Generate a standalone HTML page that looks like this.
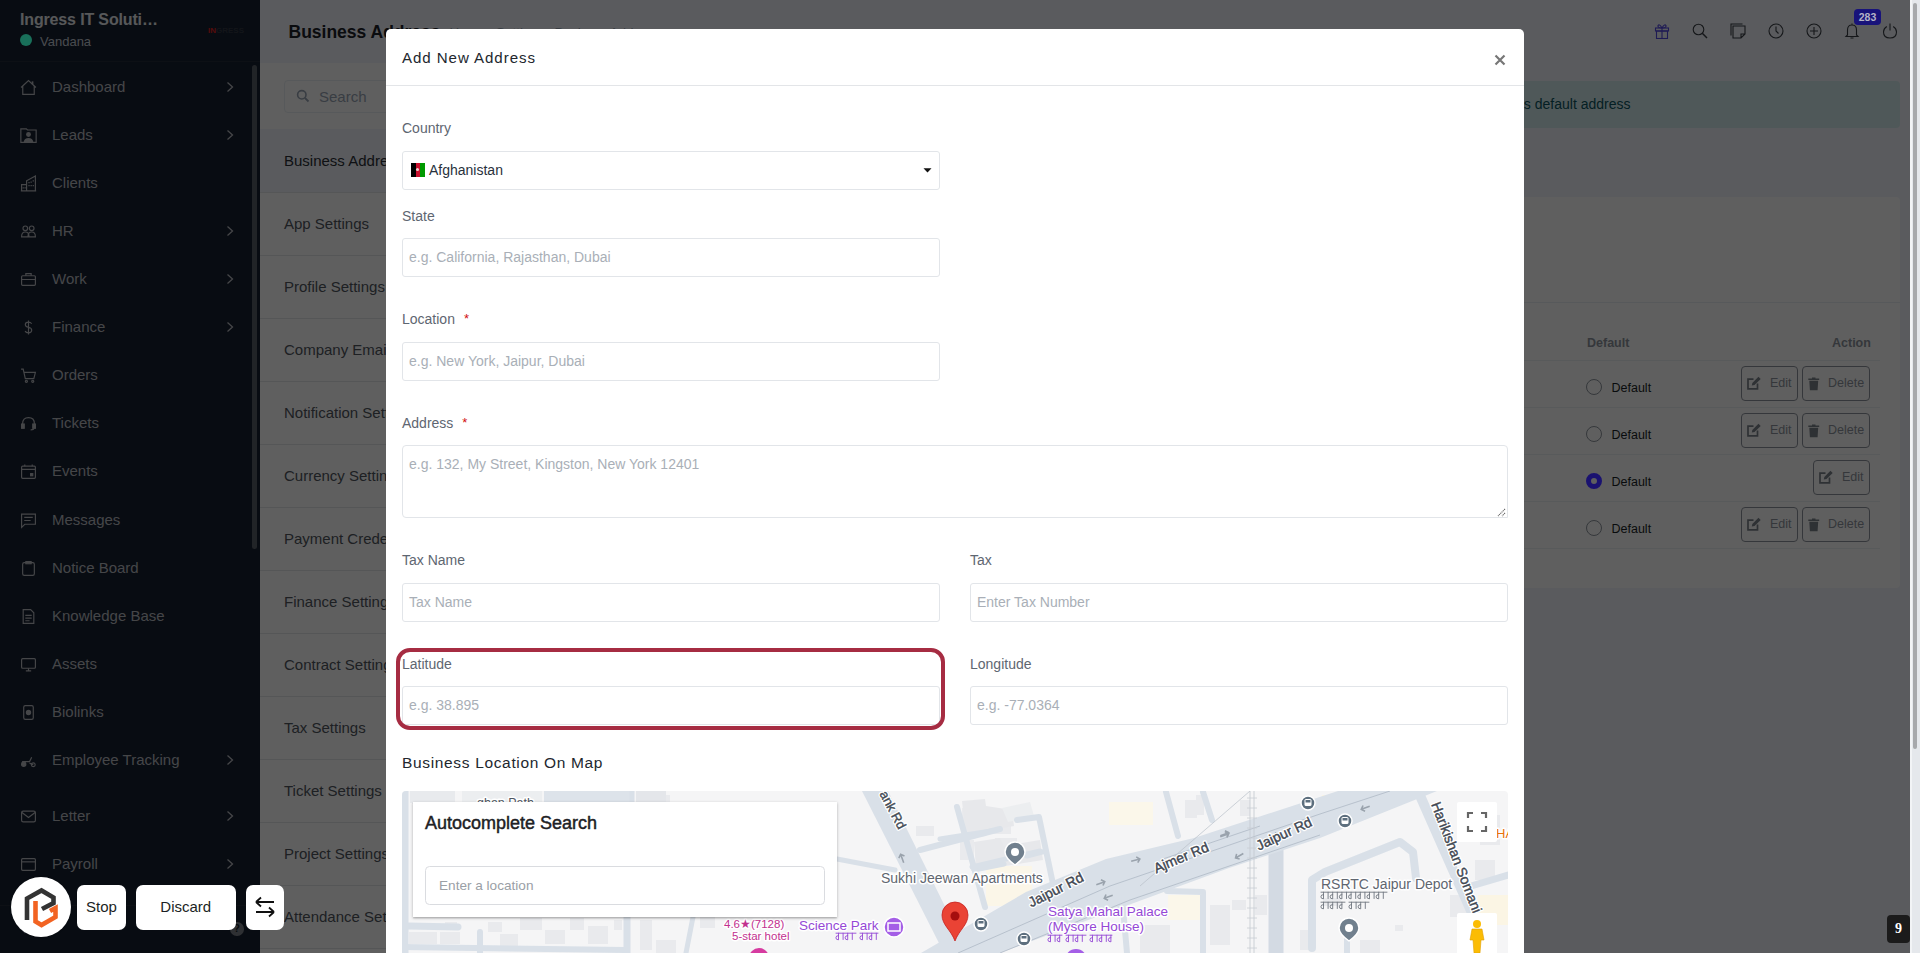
<!DOCTYPE html><html><head><meta charset="utf-8"><style>
*{box-sizing:border-box;margin:0;padding:0}
html,body{width:1920px;height:953px;overflow:hidden;font-family:"Liberation Sans",sans-serif;background:#f2f4f7;color:#28313c}
.a{position:absolute}
.nw{white-space:nowrap}
#sidebar{position:absolute;left:0;top:0;width:260px;height:953px;background:#162031}
.sbi{position:absolute;left:0;width:250px;height:20px;color:#b9bcc1;font-size:15px;line-height:20px}
.sbi .t{position:absolute;left:52px;top:0;white-space:nowrap}
.sbi svg.ic{position:absolute;left:19.5px;top:1.5px;width:17px;height:17px}
.sbi svg.arr{position:absolute;left:225px;top:4px;width:10px;height:12px}
#main{position:absolute;left:260px;top:0;width:1650px;height:953px;background:#f1f4fb}
.smi{position:absolute;left:0;width:270px;height:64px;border-bottom:1px solid #e3e6ea;font-size:15px;color:#50565e;padding-left:24px;line-height:64px;white-space:nowrap}
#backdrop{position:absolute;left:0;top:0;width:1910px;height:953px;background:rgba(0,0,0,0.627)}
#modal{position:absolute;left:386px;top:29px;width:1138px;height:1000px;background:#fff;border-radius:5px 5px 0 0;overflow:hidden}
.lbl{position:absolute;font-size:14px;color:#616e80;line-height:17px;white-space:nowrap}
.inp{position:absolute;height:39px;border:1px solid #e8eef3;border-radius:4px;background:#fff;font-size:14px;color:#b2b8bf;padding-left:6px;line-height:37px;white-space:nowrap}
.req{color:#d30000;margin-left:8px;position:relative;top:-3px}
.tb{position:absolute;height:35px;border:1px solid #8e959e;border-radius:4px;font-size:12.5px;color:#8e959e;line-height:32px;white-space:nowrap}
</style></head><body>
<div id="sidebar">
<div class="a" style="left:0;top:0;width:260px;height:62px;border-bottom:1px solid #252d38"></div>
<div class="a nw" style="left:20px;top:10px;font-size:16px;font-weight:bold;color:#e9ecef;line-height:20px;letter-spacing:-0.15px">Ingress IT Soluti&hellip;</div>
<div class="a nw" style="left:40px;top:34px;font-size:13px;color:#c4cbd4;line-height:16px">Vandana</div>
<div class="a nw" style="left:208px;top:27px;font-size:8px;font-weight:bold;color:#e02020;line-height:8px">IN<span style="color:#333a44">GRESS</span></div>
<div class="a" style="left:252px;top:65px;width:5px;height:484px;background:#5a6068;border-radius:3px"></div>
<div class="sbi" style="top:77px"><svg class="ic" viewBox="0 0 16 16" fill="none" stroke="#b9bcc1" stroke-width="1.1"><path d="M1 8 L8 1.5 L15 8 M2.6 6.5 V14.5 H13.4 V6.5"/><path d="M11.8 2.2 V5" stroke-width="1.6"/></svg><span class="t">Dashboard</span><svg class="arr" viewBox="0 0 10 12"><path d="M2.5 1.5 L7.5 6 L2.5 10.5" fill="none" stroke="#b9bcc1" stroke-width="1.3"/></svg></div>
<div class="sbi" style="top:125px"><svg class="ic" viewBox="0 0 16 16" fill="none" stroke="#b9bcc1" stroke-width="1.1"><path d="M0.8 14.5 V1.8 H6 L7 2.8 H15.2 V14.5 Z"/><circle cx="8" cy="7" r="2.3" fill="#b9bcc1" stroke="none"/><path d="M3.5 14 Q4 10.3 8 10.3 Q12 10.3 12.5 14 Z" fill="#b9bcc1" stroke="none"/></svg><span class="t">Leads</span><svg class="arr" viewBox="0 0 10 12"><path d="M2.5 1.5 L7.5 6 L2.5 10.5" fill="none" stroke="#b9bcc1" stroke-width="1.3"/></svg></div>
<div class="sbi" style="top:173px"><svg class="ic" viewBox="0 0 16 16" fill="none" stroke="#b9bcc1" stroke-width="1.1"><path d="M0.8 15 H15.2 M1.5 15 V9 H6.2 M6.2 15 V5.5 L14.5 1 V15"/><path d="M8.5 6.5v1.2M10.5 6v1.2M12.5 5v1.2M8.5 9.5v1.2M10.5 9.5v1.2M12.5 9.5v1.2M3 11.5v1.2M4.8 11.5v1.2" stroke-width="1.2"/></svg><span class="t">Clients</span></div>
<div class="sbi" style="top:221px"><svg class="ic" viewBox="0 0 16 16" fill="none" stroke="#b9bcc1" stroke-width="1.1"><circle cx="5" cy="5" r="2.2"/><circle cx="11" cy="5" r="2.2"/><path d="M1.5 13 Q1.5 8.5 5 8.5 Q8.5 8.5 8.5 13 Z M7.5 13 Q7.5 8.5 11 8.5 Q14.5 8.5 14.5 13 Z"/></svg><span class="t">HR</span><svg class="arr" viewBox="0 0 10 12"><path d="M2.5 1.5 L7.5 6 L2.5 10.5" fill="none" stroke="#b9bcc1" stroke-width="1.3"/></svg></div>
<div class="sbi" style="top:269px"><svg class="ic" viewBox="0 0 16 16" fill="none" stroke="#b9bcc1" stroke-width="1.1"><rect x="1.5" y="4.5" width="13" height="9" rx="1"/><path d="M5.5 4.5 V2.5 H10.5 V4.5 M1.5 8 H14.5"/></svg><span class="t">Work</span><svg class="arr" viewBox="0 0 10 12"><path d="M2.5 1.5 L7.5 6 L2.5 10.5" fill="none" stroke="#b9bcc1" stroke-width="1.3"/></svg></div>
<div class="sbi" style="top:317px"><svg class="ic" viewBox="0 0 16 16" fill="none" stroke="#b9bcc1" stroke-width="1.1"><path d="M11 4.5 Q10 3 8 3 Q5 3 5 5.2 Q5 7.3 8 7.8 Q11 8.3 11 10.6 Q11 13 8 13 Q5.5 13 4.8 11.3 M8 1.5 V14.5"/></svg><span class="t">Finance</span><svg class="arr" viewBox="0 0 10 12"><path d="M2.5 1.5 L7.5 6 L2.5 10.5" fill="none" stroke="#b9bcc1" stroke-width="1.3"/></svg></div>
<div class="sbi" style="top:365px"><svg class="ic" viewBox="0 0 16 16" fill="none" stroke="#b9bcc1" stroke-width="1.1"><path d="M1 2 H3 L5 11 H13 L14.5 5 H4"/><circle cx="6" cy="13.5" r="1"/><circle cx="12" cy="13.5" r="1"/></svg><span class="t">Orders</span></div>
<div class="sbi" style="top:413px"><svg class="ic" viewBox="0 0 16 16" fill="none" stroke="#b9bcc1" stroke-width="1.1"><path d="M2.5 10 V8 Q2.5 2.5 8 2.5 Q13.5 2.5 13.5 8 V10"/><rect x="1.5" y="8.5" width="2.5" height="4" fill="#b9bcc1"/><rect x="12" y="8.5" width="2.5" height="4" fill="#b9bcc1"/><path d="M13 12.5 Q13 14 10 14"/></svg><span class="t">Tickets</span></div>
<div class="sbi" style="top:461px"><svg class="ic" viewBox="0 0 16 16" fill="none" stroke="#b9bcc1" stroke-width="1.1"><rect x="1.5" y="3" width="13" height="11.5" rx="1"/><path d="M1.5 6 H14.5 M4.5 1.5 V3 M11.5 1.5 V3"/><rect x="10" y="10" width="2" height="2" fill="#b9bcc1"/></svg><span class="t">Events</span></div>
<div class="sbi" style="top:510px"><svg class="ic" viewBox="0 0 16 16" fill="none" stroke="#b9bcc1" stroke-width="1.1"><path d="M1.5 2 H14.5 V11.5 H4.5 L1.5 14.5 Z M4 5 H12 M4 8 H10"/></svg><span class="t">Messages</span></div>
<div class="sbi" style="top:558px"><svg class="ic" viewBox="0 0 16 16" fill="none" stroke="#b9bcc1" stroke-width="1.1"><rect x="2.5" y="2.5" width="11" height="12" rx="1.5"/><rect x="5.5" y="1.5" width="5" height="2"/></svg><span class="t">Notice Board</span></div>
<div class="sbi" style="top:606px"><svg class="ic" viewBox="0 0 16 16" fill="none" stroke="#b9bcc1" stroke-width="1.1"><path d="M3 1.5 H10 L13 4.5 V14.5 H3 Z M5 7 H11 M5 9.5 H11 M5 12 H9"/></svg><span class="t">Knowledge Base</span></div>
<div class="sbi" style="top:654px"><svg class="ic" viewBox="0 0 16 16" fill="none" stroke="#b9bcc1" stroke-width="1.1"><rect x="1.5" y="2.5" width="13" height="9" rx="1"/><path d="M5.5 14 H10.5 M8 11.5 V14"/></svg><span class="t">Assets</span></div>
<div class="sbi" style="top:702px"><svg class="ic" viewBox="0 0 16 16" fill="none" stroke="#b9bcc1" stroke-width="1.1"><rect x="3.5" y="1.5" width="9" height="13" rx="1.5"/><circle cx="8" cy="8" r="2" fill="#b9bcc1"/></svg><span class="t">Biolinks</span></div>
<div class="sbi" style="top:750px"><svg class="ic" viewBox="0 0 16 16" fill="none" stroke="#b9bcc1" stroke-width="1.1"><circle cx="3.5" cy="11.5" r="2" fill="#b9bcc1"/><circle cx="12.5" cy="12" r="1.8"/><path d="M2 9 H9 L11 5 M9 10.5 L12.5 12"/></svg><span class="t">Employee Tracking</span><svg class="arr" viewBox="0 0 10 12"><path d="M2.5 1.5 L7.5 6 L2.5 10.5" fill="none" stroke="#b9bcc1" stroke-width="1.3"/></svg></div>
<div class="sbi" style="top:806px"><svg class="ic" viewBox="0 0 16 16" fill="none" stroke="#b9bcc1" stroke-width="1.1"><rect x="1.5" y="3" width="13" height="10" rx="1.5"/><path d="M1.5 4 L8 9 L14.5 4"/></svg><span class="t">Letter</span><svg class="arr" viewBox="0 0 10 12"><path d="M2.5 1.5 L7.5 6 L2.5 10.5" fill="none" stroke="#b9bcc1" stroke-width="1.3"/></svg></div>
<div class="sbi" style="top:854px"><svg class="ic" viewBox="0 0 16 16" fill="none" stroke="#b9bcc1" stroke-width="1.1"><rect x="1.5" y="2.5" width="13" height="11" rx="1"/><path d="M1.5 5.5 H14.5"/></svg><span class="t">Payroll</span><svg class="arr" viewBox="0 0 10 12"><path d="M2.5 1.5 L7.5 6 L2.5 10.5" fill="none" stroke="#b9bcc1" stroke-width="1.3"/></svg></div>
<div class="a" style="left:0;top:905px;width:260px;height:1px;background:#252d38"></div>
<svg class="a" style="left:18px;top:921px" width="10" height="14" viewBox="0 0 10 14"><path d="M7.5 2 L2.5 7 L7.5 12" fill="none" stroke="#99a5b5" stroke-width="1.6"/></svg>
<div class="a" style="left:230px;top:922px;width:13.5px;height:13.5px;border-radius:50%;background:#7d8288;color:#171f29;font-size:10px;font-weight:bold;line-height:13.5px;text-align:center">?</div>
</div>
<div id="main">
<div class="a nw" style="left:28.5px;top:22.44px;font-size:17.50px;line-height:21px;color:#1c2128;font-weight:bold;">Business Address</div>
<div class="a nw" style="left:189.5px;top:25.32px;font-size:13.50px;line-height:16px;color:#99a5b5;">Home</div>
<div class="a nw" style="left:236.0px;top:25.32px;font-size:13.50px;line-height:16px;color:#99a5b5;">Settings</div>
<div class="a nw" style="left:294.5px;top:25.32px;font-size:13.50px;line-height:16px;color:#99a5b5;">Business</div>
<div class="a nw" style="left:349.5px;top:25.32px;font-size:13.50px;line-height:16px;color:#99a5b5;">Address</div>
<div class="a" style="left:0;top:63px;width:270px;height:890px;background:#fff;border-right:1px solid #e8eef3"></div>
<div class="a" style="left:24px;top:80px;width:230px;height:33px;border:1px solid #e8eef3;border-radius:4px"></div>
<svg class="a" style="left:36px;top:89px" width="14" height="14" viewBox="0 0 14 14"><circle cx="5.8" cy="5.8" r="4.2" fill="none" stroke="#99a5b5" stroke-width="1.6"/><path d="M9 9 L12.5 12.5" stroke="#99a5b5" stroke-width="1.8"/></svg>
<div class="a nw" style="left:59px;top:88px;font-size:15px;color:#99a5b5;line-height:17px">Search</div>
<div class="smi" style="top:129px;background:#f1f4fb;color:#2a2f36;">Business Address</div>
<div class="smi" style="top:192px;">App Settings</div>
<div class="smi" style="top:255px;">Profile Settings</div>
<div class="smi" style="top:318px;">Company Email</div>
<div class="smi" style="top:381px;">Notification Settings</div>
<div class="smi" style="top:444px;">Currency Settings</div>
<div class="smi" style="top:507px;">Payment Credentials</div>
<div class="smi" style="top:570px;">Finance Settings</div>
<div class="smi" style="top:633px;">Contract Settings</div>
<div class="smi" style="top:696px;">Tax Settings</div>
<div class="smi" style="top:759px;">Ticket Settings</div>
<div class="smi" style="top:822px;">Project Settings</div>
<div class="smi" style="top:885px;">Attendance Settings</div>
<div class="a" style="left:300px;top:81px;width:1340px;height:47px;background:#d4ecef;border-radius:4px"></div>
<div class="a nw" style="right:279.5px;top:95.5px;font-size:14px;color:#0c5460;line-height:17px">Click on the radio button to set this as default address</div>
<div class="a" style="left:300px;top:197px;width:1340px;height:391px;background:#fff;border-radius:4px"></div>
<div class="a" style="left:300px;top:302px;width:1340px;height:1px;background:#e8eef3"></div>
<div class="a nw" style="left:1327.0px;top:336.17px;font-size:12.50px;line-height:15px;color:#8e959e;font-weight:bold;">Default</div>
<div class="a nw" style="left:1572.0px;top:336.17px;font-size:12.50px;line-height:15px;color:#8e959e;font-weight:bold;">Action</div>
<div class="a" style="left:300px;top:360px;width:1320px;height:1px;background:#edf0f3"></div>
<div class="a" style="left:1326px;top:379px;width:16px;height:16px;border-radius:50%;border:1px solid #8e959e;background:#fff"></div>
<div class="a nw" style="left:1351.5px;top:381.17px;font-size:12.50px;line-height:15px;color:#1a1f26;">Default</div>
<div class="tb" style="left:1481px;top:366px;width:57px;height:35px"><svg class="a" style="left:5px;top:9px" width="15" height="14" viewBox="0 0 15 14"><path d="M10.5 7.5 V12.8 H1 V3.2 H6.5" fill="none" stroke="#7d848c" stroke-width="1.7"/><path d="M4.8 9.6 L5.3 7 L11.5 0.8 L13.7 3 L7.5 9.1 Z" fill="#7d848c"/></svg><span class="a" style="left:28px;top:0">Edit</span></div>
<div class="tb" style="left:1542px;top:366px;width:68px;height:35px"><svg class="a" style="left:5px;top:10px" width="12" height="14" viewBox="0 0 12 14"><path d="M0.3 1.6 H11.2 V3 H0.3 Z M4 0.4 H7.5 V1.6 H4 Z M1.3 3.8 H10.2 L9.6 13.2 H1.9 Z" fill="#7d848c"/></svg><span class="a" style="left:25px;top:0">Delete</span></div>
<div class="a" style="left:300px;top:407px;width:1320px;height:1px;background:#edf0f3"></div>
<div class="a" style="left:1326px;top:426px;width:16px;height:16px;border-radius:50%;border:1px solid #8e959e;background:#fff"></div>
<div class="a nw" style="left:1351.5px;top:428.17px;font-size:12.50px;line-height:15px;color:#1a1f26;">Default</div>
<div class="tb" style="left:1481px;top:413px;width:57px;height:35px"><svg class="a" style="left:5px;top:9px" width="15" height="14" viewBox="0 0 15 14"><path d="M10.5 7.5 V12.8 H1 V3.2 H6.5" fill="none" stroke="#7d848c" stroke-width="1.7"/><path d="M4.8 9.6 L5.3 7 L11.5 0.8 L13.7 3 L7.5 9.1 Z" fill="#7d848c"/></svg><span class="a" style="left:28px;top:0">Edit</span></div>
<div class="tb" style="left:1542px;top:413px;width:68px;height:35px"><svg class="a" style="left:5px;top:10px" width="12" height="14" viewBox="0 0 12 14"><path d="M0.3 1.6 H11.2 V3 H0.3 Z M4 0.4 H7.5 V1.6 H4 Z M1.3 3.8 H10.2 L9.6 13.2 H1.9 Z" fill="#7d848c"/></svg><span class="a" style="left:25px;top:0">Delete</span></div>
<div class="a" style="left:300px;top:454px;width:1320px;height:1px;background:#edf0f3"></div>
<div class="a nw" style="left:1351.5px;top:475.17px;font-size:12.50px;line-height:15px;color:#1a1f26;">Default</div>
<div class="tb" style="left:1553px;top:460px;width:57px;height:35px"><svg class="a" style="left:5px;top:9px" width="15" height="14" viewBox="0 0 15 14"><path d="M10.5 7.5 V12.8 H1 V3.2 H6.5" fill="none" stroke="#7d848c" stroke-width="1.7"/><path d="M4.8 9.6 L5.3 7 L11.5 0.8 L13.7 3 L7.5 9.1 Z" fill="#7d848c"/></svg><span class="a" style="left:28px;top:0">Edit</span></div>
<div class="a" style="left:300px;top:501px;width:1320px;height:1px;background:#edf0f3"></div>
<div class="a" style="left:1326px;top:520px;width:16px;height:16px;border-radius:50%;border:1px solid #8e959e;background:#fff"></div>
<div class="a nw" style="left:1351.5px;top:522.17px;font-size:12.50px;line-height:15px;color:#1a1f26;">Default</div>
<div class="tb" style="left:1481px;top:507px;width:57px;height:35px"><svg class="a" style="left:5px;top:9px" width="15" height="14" viewBox="0 0 15 14"><path d="M10.5 7.5 V12.8 H1 V3.2 H6.5" fill="none" stroke="#7d848c" stroke-width="1.7"/><path d="M4.8 9.6 L5.3 7 L11.5 0.8 L13.7 3 L7.5 9.1 Z" fill="#7d848c"/></svg><span class="a" style="left:28px;top:0">Edit</span></div>
<div class="tb" style="left:1542px;top:507px;width:68px;height:35px"><svg class="a" style="left:5px;top:10px" width="12" height="14" viewBox="0 0 12 14"><path d="M0.3 1.6 H11.2 V3 H0.3 Z M4 0.4 H7.5 V1.6 H4 Z M1.3 3.8 H10.2 L9.6 13.2 H1.9 Z" fill="#7d848c"/></svg><span class="a" style="left:25px;top:0">Delete</span></div>
<div class="a" style="left:300px;top:548px;width:1320px;height:1px;background:#edf0f3"></div>
<svg class="a" style="left:1394px;top:23px" width="16" height="16" viewBox="0 0 16 16" fill="none" stroke="#5248e0" stroke-width="1.1"><rect x="1.5" y="5" width="13" height="3"/><rect x="2.5" y="8" width="11" height="7.5"/><path d="M8 5 V15.5 M8 5 Q5.5 0.5 4 2.5 Q3.5 5 8 5 Q10.5 0.5 12 2.5 Q12.5 5 8 5"/></svg>
<svg class="a" style="left:1432px;top:23px" width="16" height="16" viewBox="0 0 16 16" fill="none" stroke="#3a3f46" stroke-width="1.1"><circle cx="6.5" cy="6.5" r="5.3"/><path d="M10.3 10.3 L15 15" stroke-width="1.5"/></svg>
<svg class="a" style="left:1470px;top:23px" width="16" height="16" viewBox="0 0 16 16" fill="none" stroke="#3a3f46" stroke-width="1.1"><path d="M1 12.5 V1 H12.5"/><path d="M3 3 H15 V11 L11 15 H3 Z M15 11 H11 V15"/></svg>
<svg class="a" style="left:1508px;top:23px" width="16" height="16" viewBox="0 0 16 16" fill="none" stroke="#3a3f46" stroke-width="1.1"><circle cx="8" cy="8" r="7"/><path d="M8 3.5 V8 L10.5 10.5"/></svg>
<svg class="a" style="left:1546px;top:23px" width="16" height="16" viewBox="0 0 16 16" fill="none" stroke="#3a3f46" stroke-width="1.1"><circle cx="8" cy="8" r="7"/><path d="M8 4 V12 M4 8 H12"/></svg>
<svg class="a" style="left:1584px;top:23px" width="16" height="16" viewBox="0 0 16 16" fill="none" stroke="#3a3f46" stroke-width="1.1"><path d="M3.5 12 V7 Q3.5 2 8 2 Q12.5 2 12.5 7 V12 L14 13.5 H2 Z M6.5 15 H9.5 M8 0.5 V2"/></svg>
<svg class="a" style="left:1622px;top:23px" width="16" height="16" viewBox="0 0 16 16" fill="none" stroke="#3a3f46" stroke-width="1.1"><path d="M4.8 3.5 Q1.5 5.5 1.5 9 Q1.5 15 8 15 Q14.5 15 14.5 9 Q14.5 5.5 11.2 3.5 M8 0.5 V7.5"/></svg>
</div>
<div id="backdrop"></div>
<div class="a" style="left:1586px;top:473px;width:16px;height:16px;border-radius:50%;border:5px solid #1a1270;background:#5f5f5f"></div>
<div class="a nw" style="left:1854px;top:9px;width:27px;height:16px;border-radius:4px;background:#18137a;color:#b4b4c6;font-size:10.5px;font-weight:bold;line-height:16px;text-align:center">283</div>
<div class="a" style="left:20px;top:34px;width:12px;height:12px;border-radius:50%;background:#19705a"></div>
<div class="a" style="left:1910px;top:0;width:10px;height:953px;background:#e5e8ec;border-left:2px solid #f2f4f6"><div class="a" style="left:1px;top:3px;width:4px;height:746px;background:#a7a9ac;border-radius:2px"></div></div>
<div id="modal">
<div class="a" style="left:0;top:56px;width:1138px;height:1px;background:#e3e5e8"></div>
<div class="a nw" style="left:16.0px;top:19.77px;font-size:15.10px;line-height:18px;color:#22272e;letter-spacing:0.93px;">Add New Address</div>
<svg class="a" style="left:1108px;top:25px" width="12" height="12" viewBox="0 0 12 12"><path d="M1.5 1.5 L10.5 10.5 M10.5 1.5 L1.5 10.5" stroke="#777" stroke-width="2.2"/></svg>
<div class="a nw" style="left:16.0px;top:90.65px;font-size:14.00px;line-height:17px;color:#5e6671;">Country</div>
<div class="a" style="left:16px;top:122px;width:538px;height:39px;border:1px solid #e2e5e9;border-radius:3px"></div>
<div class="a" style="left:25px;top:134px;width:14px;height:14px;background:linear-gradient(90deg,#000 0 33%,#c8102e 33% 66%,#009a00 66% 100%)"></div>
<div class="a" style="left:30px;top:139px;width:3px;height:3px;background:#f4d0d0;border-radius:50%"></div>
<div class="a nw" style="left:43.0px;top:132.65px;font-size:14.00px;line-height:17px;color:#28313c;">Afghanistan</div>
<svg class="a" style="left:537px;top:139px" width="9" height="5" viewBox="0 0 9 5"><path d="M0.5 0.3 L8.5 0.3 L4.5 4.6 Z" fill="#111"/></svg>
<div class="a nw" style="left:16.0px;top:178.65px;font-size:14.00px;line-height:17px;color:#5e6671;">State</div>
<div class="a" style="left:16px;top:209px;width:538px;height:39px;border:1px solid #e2e5e9;border-radius:3px"></div>
<div class="a nw" style="left:23.0px;top:219.65px;font-size:14.00px;line-height:17px;color:#a9afb7;">e.g. California, Rajasthan, Dubai</div>
<div class="a nw" style="left:16.0px;top:281.65px;font-size:14.00px;line-height:17px;color:#5e6671;">Location<span style="color:#d21010;margin-left:9px;position:relative;top:-1px;font-size:13px">*</span></div>
<div class="a" style="left:16px;top:313px;width:538px;height:39px;border:1px solid #e2e5e9;border-radius:3px"></div>
<div class="a nw" style="left:23.0px;top:323.65px;font-size:14.00px;line-height:17px;color:#a9afb7;">e.g. New York, Jaipur, Dubai</div>
<div class="a nw" style="left:16.0px;top:385.65px;font-size:14.00px;line-height:17px;color:#5e6671;">Address<span style="color:#d21010;margin-left:9px;position:relative;top:-1px;font-size:13px">*</span></div>
<div class="a" style="left:16px;top:416px;width:1106px;height:73px;border:1px solid #e2e5e9;border-radius:4px 4px 0 4px"></div>
<div class="a nw" style="left:23.0px;top:426.65px;font-size:14.00px;line-height:17px;color:#a9afb7;">e.g. 132, My Street, Kingston, New York 12401</div>
<svg class="a" style="left:1111px;top:479px" width="9" height="9" viewBox="0 0 9 9"><path d="M8 1 L1 8 M8 5 L5 8" stroke="#666" stroke-width="1.1" stroke-dasharray="1.2 0.6"/></svg>
<div class="a nw" style="left:16.0px;top:522.65px;font-size:14.00px;line-height:17px;color:#5e6671;">Tax Name</div>
<div class="a nw" style="left:584.0px;top:522.65px;font-size:14.00px;line-height:17px;color:#5e6671;">Tax</div>
<div class="a" style="left:16px;top:554px;width:538px;height:39px;border:1px solid #e2e5e9;border-radius:3px"></div>
<div class="a nw" style="left:23.0px;top:564.65px;font-size:14.00px;line-height:17px;color:#a9afb7;">Tax Name</div>
<div class="a" style="left:584px;top:554px;width:538px;height:39px;border:1px solid #e2e5e9;border-radius:3px"></div>
<div class="a nw" style="left:591.0px;top:564.65px;font-size:14.00px;line-height:17px;color:#a9afb7;">Enter Tax Number</div>
<div class="a nw" style="left:16.0px;top:626.65px;font-size:14.00px;line-height:17px;color:#5e6671;">Latitude</div>
<div class="a nw" style="left:584.0px;top:626.65px;font-size:14.00px;line-height:17px;color:#5e6671;">Longitude</div>
<div class="a" style="left:16px;top:657px;width:538px;height:39px;border:1px solid #e2e5e9;border-radius:3px"></div>
<div class="a nw" style="left:23.0px;top:667.65px;font-size:14.00px;line-height:17px;color:#a9afb7;">e.g. 38.895</div>
<div class="a" style="left:584px;top:657px;width:538px;height:39px;border:1px solid #e2e5e9;border-radius:3px"></div>
<div class="a nw" style="left:591.0px;top:667.65px;font-size:14.00px;line-height:17px;color:#a9afb7;">e.g. -77.0364</div>
<div class="a" style="left:10px;top:619px;width:549px;height:82px;border:4px solid #a62c42;border-radius:14px"></div>
<div class="a nw" style="left:16.0px;top:724.13px;font-size:15.50px;line-height:19px;color:#22272e;letter-spacing:0.66px;">Business Location On Map</div>
</div>
<svg class="a" style="left:402px;top:791px;border-radius:4px 4px 0 0" width="1106" height="162" viewBox="402 791 1106 162" font-family="Liberation Sans, sans-serif"><rect x="402" y="791" width="1106" height="162" fill="#f5f5f6"/><rect x="412" y="796" width="12" height="8" fill="#e9eaed"/><rect x="430" y="794" width="14" height="6" fill="#e9eaed"/><rect x="445" y="922" width="12" height="8" fill="#e9eaed"/><rect x="409" y="932" width="28" height="12" fill="#e9eaed"/><rect x="440" y="932" width="20" height="12" fill="#e9eaed"/><rect x="488" y="922" width="14" height="10" fill="#e9eaed"/><rect x="500" y="934" width="18" height="12" fill="#e9eaed"/><rect x="520" y="918" width="22" height="12" fill="#e9eaed"/><rect x="545" y="930" width="20" height="14" fill="#e9eaed"/><rect x="570" y="918" width="14" height="12" fill="#e9eaed"/><rect x="588" y="926" width="20" height="18" fill="#e9eaed"/><rect x="614" y="920" width="8" height="10" fill="#e9eaed"/><rect x="640" y="920" width="12" height="30" fill="#e9eaed"/><rect x="656" y="940" width="20" height="13" fill="#e9eaed"/><rect x="700" y="912" width="15" height="16" fill="#e9eaed"/><rect x="565" y="800" width="40" height="8" fill="#e9eaed"/><rect x="640" y="795" width="30" height="8" fill="#e9eaed"/><rect x="916" y="826" width="18" height="10" fill="#e9eaed"/><rect x="962" y="808" width="20" height="22" fill="#e9eaed"/><rect x="985" y="818" width="26" height="16" fill="#e9eaed"/><rect x="995" y="838" width="22" height="18" fill="#e9eaed"/><rect x="960" y="840" width="14" height="20" fill="#e9eaed"/><rect x="1008" y="870" width="22" height="18" fill="#e9eaed"/><rect x="1118" y="890" width="18" height="12" fill="#e9eaed"/><rect x="1185" y="800" width="12" height="18" fill="#e9eaed"/><rect x="1196" y="795" width="8" height="20" fill="#e9eaed"/><rect x="1240" y="800" width="10" height="16" fill="#e9eaed"/><rect x="1210" y="905" width="20" height="40" fill="#e9eaed"/><rect x="1232" y="900" width="14" height="10" fill="#e9eaed"/><rect x="1140" y="925" width="30" height="28" fill="#e9eaed"/><rect x="1255" y="895" width="12" height="20" fill="#e9eaed"/><rect x="1325" y="810" width="30" height="10" fill="#e9eaed"/><rect x="1360" y="800" width="12" height="8" fill="#e9eaed"/><rect x="1480" y="815" width="20" height="30" fill="#e9eaed"/><rect x="1475" y="860" width="20" height="20" fill="#e9eaed"/><rect x="1450" y="895" width="20" height="22" fill="#e9eaed"/><rect x="1482" y="900" width="24" height="25" fill="#e9eaed"/><rect x="1395" y="925" width="8" height="6" fill="#e9eaed"/><rect x="1360" y="940" width="20" height="13" fill="#e9eaed"/><rect x="1300" y="930" width="10" height="20" fill="#e9eaed"/><rect x="1323" y="898" width="18" height="8" fill="#e9eaed"/><rect x="986" y="866" width="46" height="40" fill="#fbf6e8"/><path d="M962 801 L985 799 L986 806 L1012 810 L1014 826 L990 830 L986 836 L966 838 Z" fill="#e7e8eb"/><path d="M974 842 L1000 838 L1004 846 L1040 840 L1043 860 L1005 866 L976 868 Z" fill="#e7e8eb"/><path d="M1002 808 L1030 802 L1034 816 L1008 822 Z" fill="#eceef0"/><rect x="1109" y="802" width="44" height="23" fill="#fbf7ea"/><rect x="1168" y="895" width="35" height="25" fill="#fbf7ea"/><rect x="1478" y="895" width="30" height="30" fill="#fbf5e4"/><rect x="1322" y="795" width="18" height="14" fill="#fbf5e4"/><polyline points="940,839 991,831" fill="none" stroke="#d9e0e8" stroke-width="5" stroke-linecap="round" stroke-linejoin="round"/><polyline points="974,870 1004,864" fill="none" stroke="#d9e0e8" stroke-width="5" stroke-linecap="round" stroke-linejoin="round"/><polyline points="1027,856 1046,851" fill="none" stroke="#d9e0e8" stroke-width="5" stroke-linecap="round" stroke-linejoin="round"/><polyline points="405,791 405,953" fill="none" stroke="#d9e0e8" stroke-width="7" stroke-linecap="round" stroke-linejoin="round"/><polyline points="409,926 458,927" fill="none" stroke="#d9e0e8" stroke-width="7" stroke-linecap="round" stroke-linejoin="round"/><polyline points="480,932 480,953" fill="none" stroke="#d9e0e8" stroke-width="6" stroke-linecap="round" stroke-linejoin="round"/><polyline points="402,947 625,950" fill="none" stroke="#d9e0e8" stroke-width="6" stroke-linecap="round" stroke-linejoin="round"/><polyline points="627,917 627,953" fill="none" stroke="#d9e0e8" stroke-width="7" stroke-linecap="round" stroke-linejoin="round"/><polyline points="693,917 686,953" fill="none" stroke="#d9e0e8" stroke-width="5" stroke-linecap="round" stroke-linejoin="round"/><rect x="544" y="791" width="86" height="12" fill="#dde3ea"/><rect x="636" y="791" width="30" height="12" fill="#e4e6ea"/><rect x="410" y="791" width="45" height="12" fill="#e8eaed"/><rect x="462" y="791" width="80" height="12" fill="#eceef0"/><polyline points="632,791 632,802" fill="none" stroke="#d9e0e8" stroke-width="5" stroke-linecap="round" stroke-linejoin="round"/><polyline points="837,859 895,870" fill="none" stroke="#d9e0e8" stroke-width="5" stroke-linecap="round" stroke-linejoin="round"/><polyline points="920,850 1000,829" fill="none" stroke="#d9e0e8" stroke-width="6" stroke-linecap="round" stroke-linejoin="round"/><polyline points="957,807 985,907" fill="none" stroke="#d9e0e8" stroke-width="6" stroke-linecap="round" stroke-linejoin="round"/><polyline points="1017,820 1039,817 1053,884" fill="none" stroke="#d9e0e8" stroke-width="6" stroke-linecap="round" stroke-linejoin="round"/><polyline points="972,867 1040,851" fill="none" stroke="#d9e0e8" stroke-width="5" stroke-linecap="round" stroke-linejoin="round"/><polyline points="1166,792 1178,836" fill="none" stroke="#d9e0e8" stroke-width="6" stroke-linecap="round" stroke-linejoin="round"/><polyline points="1203,792 1212,820" fill="none" stroke="#d9e0e8" stroke-width="6" stroke-linecap="round" stroke-linejoin="round"/><polyline points="1123,908 1127,953" fill="none" stroke="#d9e0e8" stroke-width="6" stroke-linecap="round" stroke-linejoin="round"/><polyline points="1167,891 1203,892 1203,953" fill="none" stroke="#d9e0e8" stroke-width="6" stroke-linecap="round" stroke-linejoin="round"/><polyline points="1276,845 1276,953" fill="none" stroke="#d3dae3" stroke-width="15" stroke-linecap="round" stroke-linejoin="round"/><polyline points="1418,791 1472,913" fill="none" stroke="#d9e0e8" stroke-width="10" stroke-linecap="round" stroke-linejoin="round"/><polyline points="1461,889 1508,875" fill="none" stroke="#d9e0e8" stroke-width="7" stroke-linecap="round" stroke-linejoin="round"/><polyline points="1312,948 1312,880 1325,872 1400,842 1413,852 1416,878" fill="none" stroke="#d9e0e8" stroke-width="8" stroke-linecap="round" stroke-linejoin="round"/><polyline points="1347,935 1347,953" fill="none" stroke="#d9e0e8" stroke-width="6" stroke-linecap="round" stroke-linejoin="round"/><polygon points="862,791 888,791 968,953 944,953" fill="#d9e0e8"/><polygon points="921,953 1026,892 1106,859 1194,838 1338,791 1437,791 1320,838 1229,868 1123,907 1000,953" fill="#d9e0e8"/><polyline points="958,953 1110,886 1320,814 1390,791" fill="none" stroke="#aeb9c5" stroke-width="0.8"/><polyline points="1000,953 1130,900 1320,835" fill="none" stroke="#aeb9c5" stroke-width="0.8"/><polyline points="1160,860 1260,826" fill="none" stroke="#aeb9c5" stroke-width="0.8"/><path d="M1250 791 V953 M1254 791 V953" stroke="#c2c8cf" stroke-width="0.8"/><path d="M1247 798 H1257" stroke="#c9ced4" stroke-width="0.8"/><path d="M1247 808 H1257" stroke="#c9ced4" stroke-width="0.8"/><path d="M1247 818 H1257" stroke="#c9ced4" stroke-width="0.8"/><path d="M1247 828 H1257" stroke="#c9ced4" stroke-width="0.8"/><path d="M1247 838 H1257" stroke="#c9ced4" stroke-width="0.8"/><path d="M1247 848 H1257" stroke="#c9ced4" stroke-width="0.8"/><path d="M1247 858 H1257" stroke="#c9ced4" stroke-width="0.8"/><path d="M1247 868 H1257" stroke="#c9ced4" stroke-width="0.8"/><path d="M1247 878 H1257" stroke="#c9ced4" stroke-width="0.8"/><path d="M1247 888 H1257" stroke="#c9ced4" stroke-width="0.8"/><path d="M1247 898 H1257" stroke="#c9ced4" stroke-width="0.8"/><path d="M1247 908 H1257" stroke="#c9ced4" stroke-width="0.8"/><path d="M1247 918 H1257" stroke="#c9ced4" stroke-width="0.8"/><path d="M1247 928 H1257" stroke="#c9ced4" stroke-width="0.8"/><path d="M1247 938 H1257" stroke="#c9ced4" stroke-width="0.8"/><path d="M1247 948 H1257" stroke="#c9ced4" stroke-width="0.8"/><path d="M1250 791 L1140 886" stroke="#b9c0c8" stroke-width="0.7"/><g transform="translate(1136 860) rotate(-15)"><path d="M-5 0 H4 M1 -3 L4 0 L1 3" fill="none" stroke="#9aa3ad" stroke-width="1.6"/></g><g transform="translate(1101 883) rotate(-20)"><path d="M-5 0 H4 M1 -3 L4 0 L1 3" fill="none" stroke="#9aa3ad" stroke-width="1.6"/></g><g transform="translate(1225 834) rotate(-20)"><path d="M-5 0 H4 M1 -3 L4 0 L1 3" fill="none" stroke="#9aa3ad" stroke-width="1.6"/></g><g transform="translate(1108 897) rotate(160)"><path d="M-5 0 H4 M1 -3 L4 0 L1 3" fill="none" stroke="#9aa3ad" stroke-width="1.6"/></g><g transform="translate(1239 856) rotate(150)"><path d="M-5 0 H4 M1 -3 L4 0 L1 3" fill="none" stroke="#9aa3ad" stroke-width="1.6"/></g><g transform="translate(1365 808) rotate(160)"><path d="M-5 0 H4 M1 -3 L4 0 L1 3" fill="none" stroke="#9aa3ad" stroke-width="1.6"/></g><g transform="translate(1225 835) rotate(-20)"><path d="M-5 0 H4 M1 -3 L4 0 L1 3" fill="none" stroke="#9aa3ad" stroke-width="1.6"/></g><g transform="translate(1275 836) rotate(-20)"><path d="M-5 0 H4 M1 -3 L4 0 L1 3" fill="none" stroke="#9aa3ad" stroke-width="1.6"/></g><g transform="translate(902 858) rotate(-110)"><path d="M-5 0 H4 M1 -3 L4 0 L1 3" fill="none" stroke="#9aa3ad" stroke-width="1.6"/></g><text x="477" y="807" font-size="12.5" fill="#fff" stroke="#fff" stroke-width="3" stroke-linejoin="round" font-weight="normal" text-anchor="start">ghan Path</text><text x="477" y="807" font-size="12.5" fill="#4f5661" font-weight="normal" text-anchor="start">ghan Path</text><text x="881" y="883" font-size="14" fill="#fff" stroke="#fff" stroke-width="3" stroke-linejoin="round" font-weight="normal" text-anchor="start">Sukhi Jeewan Apartments</text><text x="881" y="883" font-size="14" fill="#5f6670" font-weight="normal" text-anchor="start">Sukhi Jeewan Apartments</text><text x="889" y="812" font-size="13" fill="#fff" stroke="#fff" stroke-width="3" stroke-linejoin="round" font-weight="normal" text-anchor="middle" transform="rotate(62 889 812)">ank Rd</text><text x="889" y="812" font-size="13" fill="#444c56" stroke="#444c56" stroke-width="0.4" text-anchor="middle" transform="rotate(62 889 812)">ank Rd</text><text x="1058" y="894" font-size="14" fill="#fff" stroke="#fff" stroke-width="3" stroke-linejoin="round" font-weight="normal" text-anchor="middle" transform="rotate(-27 1058 894)">Jaipur Rd</text><text x="1058" y="894" font-size="14" fill="#3f4752" stroke="#3f4752" stroke-width="0.4" text-anchor="middle" transform="rotate(-27 1058 894)">Jaipur Rd</text><text x="1183" y="862" font-size="14" fill="#fff" stroke="#fff" stroke-width="3" stroke-linejoin="round" font-weight="normal" text-anchor="middle" transform="rotate(-23 1183 862)">Ajmer Rd</text><text x="1183" y="862" font-size="14" fill="#3f4752" stroke="#3f4752" stroke-width="0.4" text-anchor="middle" transform="rotate(-23 1183 862)">Ajmer Rd</text><text x="1286" y="838" font-size="14" fill="#fff" stroke="#fff" stroke-width="3" stroke-linejoin="round" font-weight="normal" text-anchor="middle" transform="rotate(-25 1286 838)">Jaipur Rd</text><text x="1286" y="838" font-size="14" fill="#3f4752" stroke="#3f4752" stroke-width="0.4" text-anchor="middle" transform="rotate(-25 1286 838)">Jaipur Rd</text><text x="1452" y="859" font-size="14" fill="#fff" stroke="#fff" stroke-width="3" stroke-linejoin="round" font-weight="normal" text-anchor="middle" transform="rotate(69 1452 859)">Harikishan Somani</text><text x="1452" y="859" font-size="14" fill="#3f4752" stroke="#3f4752" stroke-width="0.4" text-anchor="middle" transform="rotate(69 1452 859)">Harikishan Somani</text><text x="1321" y="889" font-size="14" fill="#fff" stroke="#fff" stroke-width="3" stroke-linejoin="round" font-weight="normal" text-anchor="start">RSRTC Jaipur Depot</text><text x="1321" y="889" font-size="14" fill="#5f6670" font-weight="normal" text-anchor="start">RSRTC Jaipur Depot</text><path d="M1321.0 892.2 H1387.0 M1323.5 892.2 V898.5 M1323.5 894.6 q-2.6 -0.2 -2.6 2.2 q0 2 2.2 2 M1328.1 892.2 V898.5 M1332.7 892.2 V898.5 M1332.7 894.6 q-2.6 -0.2 -2.6 2.2 q0 2 2.2 2 M1337.3 892.2 V898.5 M1341.9 892.2 V898.5 M1341.9 894.6 q-2.6 -0.2 -2.6 2.2 q0 2 2.2 2 M1346.5 892.2 V898.5 M1351.1 892.2 V898.5 M1351.1 894.6 q-2.6 -0.2 -2.6 2.2 q0 2 2.2 2 M1355.7 892.2 V898.5 M1360.3 892.2 V898.5 M1360.3 894.6 q-2.6 -0.2 -2.6 2.2 q0 2 2.2 2 M1364.9 892.2 V898.5 M1369.5 892.2 V898.5 M1369.5 894.6 q-2.6 -0.2 -2.6 2.2 q0 2 2.2 2 M1374.1 892.2 V898.5 M1378.7 892.2 V898.5 M1378.7 894.6 q-2.6 -0.2 -2.6 2.2 q0 2 2.2 2 M1383.3 892.2 V898.5 " fill="none" stroke="#6f767f" stroke-width="0.9" stroke-linecap="round"/><path d="M1321.0 902.2 H1345.0 M1323.5 902.2 V908.5 M1323.5 904.6 q-2.6 -0.2 -2.6 2.2 q0 2 2.2 2 M1328.1 902.2 V908.5 M1332.7 902.2 V908.5 M1332.7 904.6 q-2.6 -0.2 -2.6 2.2 q0 2 2.2 2 M1337.3 902.2 V908.5 M1341.9 902.2 V908.5 M1341.9 904.6 q-2.6 -0.2 -2.6 2.2 q0 2 2.2 2 M1349.0 902.2 H1369.0 M1351.5 902.2 V908.5 M1351.5 904.6 q-2.6 -0.2 -2.6 2.2 q0 2 2.2 2 M1356.1 902.2 V908.5 M1360.7 902.2 V908.5 M1360.7 904.6 q-2.6 -0.2 -2.6 2.2 q0 2 2.2 2 M1365.3 902.2 V908.5 " fill="none" stroke="#6f767f" stroke-width="0.9" stroke-linecap="round"/><text x="1048" y="916" font-size="13.5" fill="#fff" stroke="#fff" stroke-width="3" stroke-linejoin="round" font-weight="normal" text-anchor="start">Satya Mahal Palace</text><text x="1048" y="916" font-size="13.5" fill="#9548d6" font-weight="normal" text-anchor="start">Satya Mahal Palace</text><text x="1048" y="931" font-size="13.5" fill="#fff" stroke="#fff" stroke-width="3" stroke-linejoin="round" font-weight="normal" text-anchor="start">(Mysore House)</text><text x="1048" y="931" font-size="13.5" fill="#9548d6" font-weight="normal" text-anchor="start">(Mysore House)</text><path d="M1048.0 935.2 H1062.0 M1050.5 935.2 V941.5 M1050.5 937.6 q-2.6 -0.2 -2.6 2.2 q0 2 2.2 2 M1055.1 935.2 V941.5 M1059.7 935.2 V941.5 M1059.7 937.6 q-2.6 -0.2 -2.6 2.2 q0 2 2.2 2 M1066.0 935.2 H1086.0 M1068.5 935.2 V941.5 M1068.5 937.6 q-2.6 -0.2 -2.6 2.2 q0 2 2.2 2 M1073.1 935.2 V941.5 M1077.7 935.2 V941.5 M1077.7 937.6 q-2.6 -0.2 -2.6 2.2 q0 2 2.2 2 M1082.3 935.2 V941.5 M1090.0 935.2 H1112.0 M1092.5 935.2 V941.5 M1092.5 937.6 q-2.6 -0.2 -2.6 2.2 q0 2 2.2 2 M1097.1 935.2 V941.5 M1101.7 935.2 V941.5 M1101.7 937.6 q-2.6 -0.2 -2.6 2.2 q0 2 2.2 2 M1106.3 935.2 V941.5 M1110.9 935.2 V941.5 M1110.9 937.6 q-2.6 -0.2 -2.6 2.2 q0 2 2.2 2 " fill="none" stroke="#9548d6" stroke-width="0.9" stroke-linecap="round"/><text x="799" y="930" font-size="13.5" fill="#fff" stroke="#fff" stroke-width="3" stroke-linejoin="round" font-weight="normal" text-anchor="start">Science Park</text><text x="799" y="930" font-size="13.5" fill="#9548d6" font-weight="normal" text-anchor="start">Science Park</text><path d="M836.0 933.2 H856.0 M838.5 933.2 V939.5 M838.5 935.6 q-2.6 -0.2 -2.6 2.2 q0 2 2.2 2 M843.1 933.2 V939.5 M847.7 933.2 V939.5 M847.7 935.6 q-2.6 -0.2 -2.6 2.2 q0 2 2.2 2 M852.3 933.2 V939.5 M860.0 933.2 H878.0 M862.5 933.2 V939.5 M862.5 935.6 q-2.6 -0.2 -2.6 2.2 q0 2 2.2 2 M867.1 933.2 V939.5 M871.7 933.2 V939.5 M871.7 935.6 q-2.6 -0.2 -2.6 2.2 q0 2 2.2 2 M876.3 933.2 V939.5 " fill="none" stroke="#9548d6" stroke-width="0.9" stroke-linecap="round"/><text x="724" y="928" font-size="11.5" fill="#fff" stroke="#fff" stroke-width="3" stroke-linejoin="round" font-weight="normal" text-anchor="start">4.6&#9733;(7128)</text><text x="724" y="928" font-size="11.5" fill="#c2318f" font-weight="normal" text-anchor="start">4.6&#9733;(7128)</text><text x="732" y="940" font-size="11.5" fill="#fff" stroke="#fff" stroke-width="3" stroke-linejoin="round" font-weight="normal" text-anchor="start">5-star hotel</text><text x="732" y="940" font-size="11.5" fill="#c2318f" font-weight="normal" text-anchor="start">5-star hotel</text><text x="1496" y="838" font-size="13" fill="#fff" stroke="#fff" stroke-width="3" stroke-linejoin="round" font-weight="normal" text-anchor="start">HA</text><text x="1496" y="838" font-size="13" fill="#e8710a" font-weight="normal" text-anchor="start">HA</text><path d="M1015 852 m-10 0 a10 10 0 1 1 20 0 q0 6 -10 13 q-10 -7 -10 -13z" fill="#71808e" stroke="#fff" stroke-width="1.5"/><circle cx="1015" cy="852" r="4" fill="#fff"/><path d="M1349 928 m-10 0 a10 10 0 1 1 20 0 q0 6 -10 13 q-10 -7 -10 -13z" fill="#71808e" stroke="#fff" stroke-width="1.5"/><circle cx="1349" cy="928" r="4" fill="#fff"/><circle cx="981" cy="924" r="7" fill="#5d6f7e" stroke="#fff" stroke-width="1.5"/><rect x="977.5" y="920" width="7" height="7" rx="1.5" fill="#fff"/><rect x="978.5" y="921" width="5" height="2.5" fill="#5d6f7e"/><circle cx="1024" cy="939" r="7" fill="#5d6f7e" stroke="#fff" stroke-width="1.5"/><rect x="1020.5" y="935" width="7" height="7" rx="1.5" fill="#fff"/><rect x="1021.5" y="936" width="5" height="2.5" fill="#5d6f7e"/><circle cx="1308" cy="803" r="7" fill="#5d6f7e" stroke="#fff" stroke-width="1.5"/><rect x="1304.5" y="799" width="7" height="7" rx="1.5" fill="#fff"/><rect x="1305.5" y="800" width="5" height="2.5" fill="#5d6f7e"/><circle cx="1345" cy="821" r="7" fill="#5d6f7e" stroke="#fff" stroke-width="1.5"/><rect x="1341.5" y="817" width="7" height="7" rx="1.5" fill="#fff"/><rect x="1342.5" y="818" width="5" height="2.5" fill="#5d6f7e"/><circle cx="894" cy="927" r="10" fill="#a45ee6" stroke="#fff" stroke-width="1.5"/><rect x="888" y="923" width="12" height="8" fill="none" stroke="#fff" stroke-width="1.5"/><circle cx="759" cy="958" r="10" fill="#d63ba0"/><circle cx="1076" cy="960" r="11" fill="#a45ee6"/><path d="M955 941 C951 930 942 925 942 915 A13 13 0 1 1 968 915 C968 925 959 930 955 941Z" fill="#ea4335" stroke="#c5221f" stroke-width="0.8"/><circle cx="955" cy="916" r="4.5" fill="#a50e0e"/><defs><filter id="sh" x="-5%" y="-10%" width="110%" height="130%"><feDropShadow dx="0" dy="1" stdDeviation="1.5" flood-opacity="0.3"/></filter></defs><rect x="413" y="802" width="424" height="115" fill="#fff" filter="url(#sh)"/><rect x="413" y="917" width="424" height="1.5" fill="#000" opacity="0.08"/><text x="425" y="829" font-size="18" fill="#202124" stroke="#202124" stroke-width="0.45">Autocomplete Search</text><rect x="425.5" y="866.5" width="399" height="38" rx="4" fill="#fff" stroke="#dadce0"/><text x="439" y="890" font-size="13.6" fill="#9aa0a6" font-weight="normal" text-anchor="start">Enter a location</text><rect x="1457" y="802" width="40" height="40" rx="2" fill="#fff"/><path d="M1468 818 V813 H1473 M1481 813 H1486 V818 M1486 826 V831 H1481 M1473 831 H1468 V826" fill="none" stroke="#666" stroke-width="2.2"/><rect x="1457" y="913" width="40" height="45" rx="2" fill="#fff"/><circle cx="1477" cy="924" r="4" fill="#fbbc04"/><path d="M1472 929 H1482 L1484 940 H1481 L1480 953 H1474 L1473 940 H1470Z" fill="#fbbc04" stroke="#e0a000" stroke-width="0.6"/></svg>
<div class="a" style="left:11px;top:877px;width:60px;height:60px;border-radius:50%;background:#fff;box-shadow:0 0 2px rgba(0,0,0,.3)"></div>
<svg class="a" style="left:0;top:840px" width="80" height="113" viewBox="0 840 80 113"><path d="M27 920 V898.5 L41.5 890.5 L53.5 897.5 V903 L42 909" fill="none" stroke="#333" stroke-width="4.6" stroke-linejoin="miter"/><path d="M35.5 901 V921.5 L41.5 925 L55.5 917 V908 L50 911" fill="none" stroke="#f26322" stroke-width="4.6" stroke-linejoin="miter"/></svg>
<div class="a" style="left:77px;top:885px;width:49px;height:45px;border-radius:7px;background:#fff;font-size:15px;line-height:43px;text-align:center;color:#1b1f24">Stop</div>
<div class="a" style="left:136px;top:885px;width:99.5px;height:45px;border-radius:7px;background:#fff;font-size:15px;line-height:43px;text-align:center;color:#1b1f24">Discard</div>
<div class="a" style="left:246px;top:885px;width:38px;height:45px;border-radius:7px;background:#fff"></div>
<svg class="a" style="left:253px;top:896px" width="24" height="22" viewBox="0 0 24 22"><path d="M3 6 H21 M3 6 L8 1.5 M3 6 L8 10.5 M21 16 H3 M21 16 L16 11.5 M21 16 L16 20.5" fill="none" stroke="#111" stroke-width="1.8"/></svg>
<div class="a" style="left:1887px;top:915px;width:23px;height:28px;border-radius:4px;background:#1b1b1b;color:#fff;font-family:'Liberation Serif',serif;font-size:14px;font-weight:bold;line-height:28px;text-align:center">9</div>
</body></html>
